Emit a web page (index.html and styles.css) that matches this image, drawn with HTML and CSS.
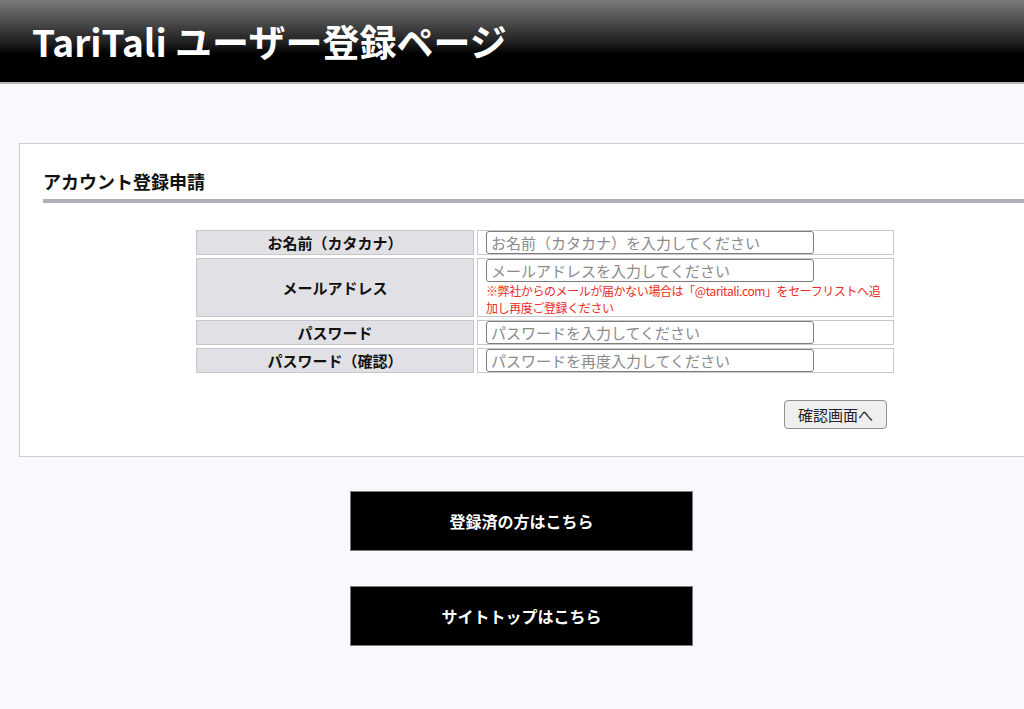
FILE: index.html
```html
<!doctype html>
<html lang="ja">
<head>
  <meta charset="UTF-8">
  <title>TariTali ユーザー登録ページ</title>
  <link rel="stylesheet" href="styles.css">
</head>
<body>
  <div class="header">
    <h1>TariTali ユーザー登録ページ</h1>
  </div>
  <div class="content">
    <div class="card">
      <h2>アカウント登録申請</h2>
      <form class="form">
        <table class="entry">
          <tr>
            <th>お名前（カタカナ）</th>
            <td><input type="text" placeholder="お名前（カタカナ）を入力してください"></td>
          </tr>
          <tr>
            <th>メールアドレス</th>
            <td>
              <input type="text" placeholder="メールアドレスを入力してください">
              <p class="note">※弊社からのメールが届かない場合は「@taritali.com」をセーフリストへ追加し再度ご登録ください</p>
            </td>
          </tr>
          <tr>
            <th>パスワード</th>
            <td><input type="password" placeholder="パスワードを入力してください"></td>
          </tr>
          <tr>
            <th>パスワード（確認）</th>
            <td><input type="password" placeholder="パスワードを再度入力してください"></td>
          </tr>
        </table>
        <div class="submit">
          <button type="button">確認画面へ</button>
        </div>
      </form>
    </div>
    <div class="links">
      <a class="black" href="#">登録済の方はこちら</a>
      <a class="black" href="#">サイトトップはこちら</a>
    </div>
  </div>
</body>
</html>
```

FILE: styles.css
```css
html {
  overflow-x: hidden;
}

body {
  margin: 0px;
  padding: 0px;
  background-color: #f8f8fd;
  font-family: "Noto Sans CJK JP", "Noto Sans", sans-serif;
  color: #111;
}

.header {
  height: 82px;
  background: linear-gradient(#7a7a7a 0px, #1c1c1c 44px, #000000 54px, #000000 82px);
  border-bottom: solid 2px #b8b8b8;
}

.header h1 {
  margin: 0px;
  padding: 16px 0px 0px 32px;
  color: #ffffff;
  font-size: 37px;
  font-weight: bold;
  line-height: 50px;
}

.content {
  padding: 59px 0px 60px 19px;
}

.card {
  width: 1060px;
  background-color: #ffffff;
  border: solid 1px #cfcfd3;
  padding: 20px 0px 27px 23px;
}

.card h2 {
  margin: 0px;
  padding-bottom: 1px;
  font-size: 18px;
  line-height: 34px;
  border-bottom: solid 4px #adb0b8;
}

.form {
  width: 704px;
  margin: 24px 0px 0px 150px;
}

.entry {
  width: 704px;
  border-spacing: 3px;
}

.entry th {
  width: 276px;
  background-color: #e1e1e5;
  border: solid 1px #c6c6cb;
  font-size: 15px;
  line-height: 21px;
  padding: 1px 0px;
}

.entry td {
  background-color: #ffffff;
  border: solid 1px #c9c9cc;
  padding: 0px 8px;
  line-height: 0;
}

.entry input {
  display: block;
  width: 328px;
  height: 23px;
  box-sizing: border-box;
  border: solid 1px #7c7c7c;
  border-radius: 3px;
  padding: 0px 4px;
  font-family: "Noto Sans CJK JP", sans-serif;
  font-size: 15px;
  color: #333;
}

.entry input::placeholder {
  color: #8a8a8a;
}

.note {
  margin: 0px;
  color: #ee2a24;
  font-size: 12px;
  line-height: 17px;
  letter-spacing: -0.4px;
}

.submit {
  text-align: right;
  padding: 24px 10px 0px 0px;
}

.submit button {
  height: 29px;
  padding: 0px 13px;
  font-family: "Noto Sans CJK JP", sans-serif;
  font-size: 15px;
  color: #222;
  background-color: #efefef;
  border: solid 1px #8f8f8f;
  border-radius: 4px;
}

.links {
  display: flex;
  flex-direction: column;
  gap: 35px;
  padding: 34px 0px 0px 331px;
}

.black {
  display: block;
  width: 341px;
  height: 58px;
  line-height: 58px;
  text-align: center;
  background-color: #000000;
  border: solid 1px #7c7c7c;
  color: #ffffff;
  font-size: 16px;
  font-weight: bold;
  text-decoration: none;
}
```
